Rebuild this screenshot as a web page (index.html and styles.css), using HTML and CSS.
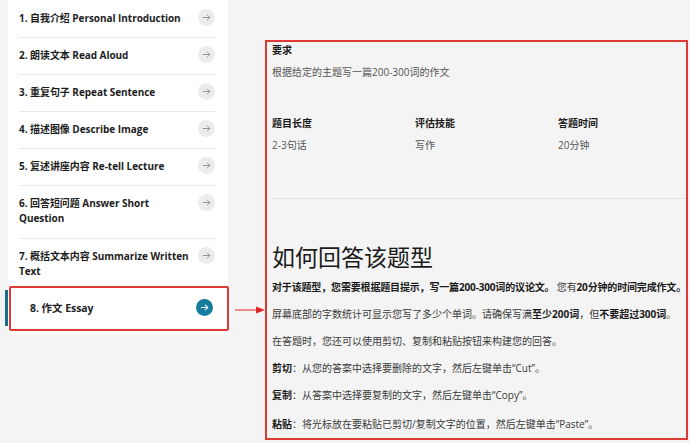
FILE: index.html
```html
<!DOCTYPE html>
<html lang="zh">
<head>
<meta charset="utf-8">
<title>PTE 题型</title>
<link rel="stylesheet" href="styles.css">
</head>
<body>
<div class="page">
  <aside class="sidebar">
    <ul class="list">
      <li class="item"><span class="label">1. 自我介绍 Personal Introduction</span><span class="go"><svg viewBox="0 0 16 16"><path d="M4 8h8M9 5l3 3-3 3"/></svg></span></li>
      <li class="item"><span class="label">2. 朗读文本 Read Aloud</span><span class="go"><svg viewBox="0 0 16 16"><path d="M4 8h8M9 5l3 3-3 3"/></svg></span></li>
      <li class="item"><span class="label">3. 重复句子 Repeat Sentence</span><span class="go"><svg viewBox="0 0 16 16"><path d="M4 8h8M9 5l3 3-3 3"/></svg></span></li>
      <li class="item"><span class="label">4. 描述图像 Describe Image</span><span class="go"><svg viewBox="0 0 16 16"><path d="M4 8h8M9 5l3 3-3 3"/></svg></span></li>
      <li class="item"><span class="label">5. 复述讲座内容 Re-tell Lecture</span><span class="go"><svg viewBox="0 0 16 16"><path d="M4 8h8M9 5l3 3-3 3"/></svg></span></li>
      <li class="item"><span class="label">6. 回答短问题 Answer Short Question</span><span class="go"><svg viewBox="0 0 16 16"><path d="M4 8h8M9 5l3 3-3 3"/></svg></span></li>
      <li class="item last"><span class="label">7. 概括文本内容 Summarize Written Text</span><span class="go"><svg viewBox="0 0 16 16"><path d="M4 8h8M9 5l3 3-3 3"/></svg></span></li>
    </ul>
    <div class="active-row">
      <span class="bar"></span>
      <div class="active-box">
        <span class="label">8. 作文 Essay</span>
        <span class="go on"><svg viewBox="0 0 16 16"><path d="M4 8h8M9 5l3 3-3 3"/></svg></span>
      </div>
    </div>
  </aside>

  <svg class="pointer" viewBox="0 0 32 10"><path d="M1 4.4 L25 4.6 L25 5.4 L1 5.6 Z"/><path d="M22 1.5 L31 5 L22 8.5 Z"/></svg>

  <section class="panel">
    <div class="req">
      <h3 class="ttl">要求</h3>
      <p class="desc">根据给定的主题写一篇200-300词的作文</p>
    </div>
    <div class="specs">
      <div class="spec"><h4 class="ttl">题目长度</h4><p class="desc">2-3句话</p></div>
      <div class="spec"><h4 class="ttl">评估技能</h4><p class="desc">写作</p></div>
      <div class="spec"><h4 class="ttl">答题时间</h4><p class="desc">20分钟</p></div>
    </div>
    <hr class="rule">
    <h2 class="howto">如何回答该题型</h2>
    <p class="para tight"><b>对于该题型，您需要根据题目提示，写一篇200-300词的议论文。</b> 您有<b>20分钟的时间完成作文。</b></p>
    <p class="para">屏幕底部的字数统计可显示您写了多少个单词。请确保写满<b>至少200词</b>，但<b>不要超过300词</b>。</p>
    <p class="para">在答题时，您还可以使用剪切、复制和粘贴按钮来构建您的回答。</p>
    <p class="para"><b>剪切</b>：从您的答案中选择要删除的文字，然后左键单击“Cut”。</p>
    <p class="para"><b>复制</b>：从答案中选择要复制的文字，然后左键单击“Copy”。</p>
    <p class="para last"><b>粘贴</b>：将光标放在要粘贴已剪切/复制文字的位置，然后左键单击“Paste”。</p>
  </section>
</div>
</body>
</html>
```

FILE: styles.css
```css
* { box-sizing: border-box; }

html, body {
  margin: 0;
  padding: 0;
  background: #f4f4f4;
  overflow: hidden;
}

body {
  font-family: "Open Sans", "Noto Sans CJK SC", sans-serif;
  color: #222;
  width: 690px;
  height: 443px;
}

.page {
  display: flex;
  align-items: flex-start;
  position: relative;
  height: 443px;
}

/* ---------- sidebar ---------- */
.sidebar {
  margin-left: 8px;
  width: 220px;
  background: #fff;
  padding-bottom: 4px;
}

.list {
  list-style: none;
  margin: 0;
  padding: 0 13px 0 11px;
}

.item {
  display: flex;
  justify-content: space-between;
  align-items: flex-start;
  padding: 10px 0 11.2px;
  border-bottom: 1px solid #e9e9e9;
}

.item:first-child { padding-top: 10.5px; }

.item.last {
  border-bottom: none;
  padding-bottom: 7px;
}

.label {
  font-size: 10px;
  line-height: 15px;
  font-weight: 700;
  color: #1d1d1d;
  letter-spacing: -0.05px;
  max-width: 175px;
}

.go {
  flex: none;
  width: 17px;
  height: 17px;
  border-radius: 50%;
  background: #ececec;
  display: flex;
  align-items: center;
  justify-content: center;
  margin-top: -2px;
}

.go svg {
  width: 13px;
  height: 13px;
  fill: none;
  stroke: #8a8a8a;
  stroke-width: 1.1;
  stroke-linecap: round;
  stroke-linejoin: round;
}

.go.on {
  background: #167c9d;
  margin-top: -2px;
}

.go.on svg { stroke: #e8f4f8; stroke-width: 1.4; }

.active-row {
  display: flex;
  align-items: center;
  margin-left: -3px;
  width: 224px;
  gap: 1px;
}

.bar {
  width: 3px;
  height: 36px;
  background: #16708d;
  flex: none;
}

.active-box {
  flex: 1;
  height: 45px;
  border: 2px solid #dc3b33;
  border-radius: 2px;
  background: #fff;
  display: flex;
  align-items: center;
  justify-content: space-between;
  padding: 0 14px 0 19px;
}

.active-box .label { font-size: 10.5px; }

/* ---------- annotation arrow ---------- */
.pointer {
  position: absolute;
  left: 234px;
  top: 305px;
  width: 32px;
  height: 10px;
  fill: #e0261f;
}

/* ---------- content panel ---------- */
.panel {
  margin: 40px 0 0 37px;
  width: 423px;
  height: 400px;
  border: 2px solid #de3b34;
  padding: 1px 0 0 5px;
  overflow: hidden;
  white-space: nowrap;
}

.ttl {
  margin: 0;
  font-size: 10px;
  line-height: 14px;
  font-weight: 700;
  color: #1a1a1a;
}

.desc {
  margin: 8px 0 0;
  font-size: 10px;
  line-height: 14px;
  color: #555;
}

.specs {
  display: grid;
  grid-template-columns: 143px 143px 1fr;
  margin-top: 37px;
}

.rule {
  margin: 46px 0 0;
  border: none;
  border-top: 1px solid #e2e2e2;
  width: 420px;
}

.howto {
  margin: 44px 0 0;
  font-size: 23px;
  line-height: 28px;
  font-weight: 400;
  color: #1a1a1a;
}

.para {
  margin: 11px 0 0;
  font-size: 10px;
  line-height: 16px;
  color: #3a3a3a;
}

.para.tight {
  margin-top: 8px;
  letter-spacing: -0.16px;
}

.para.last { margin-top: 13px; }

.para b {
  font-weight: 700;
  color: #1a1a1a;
}
```
